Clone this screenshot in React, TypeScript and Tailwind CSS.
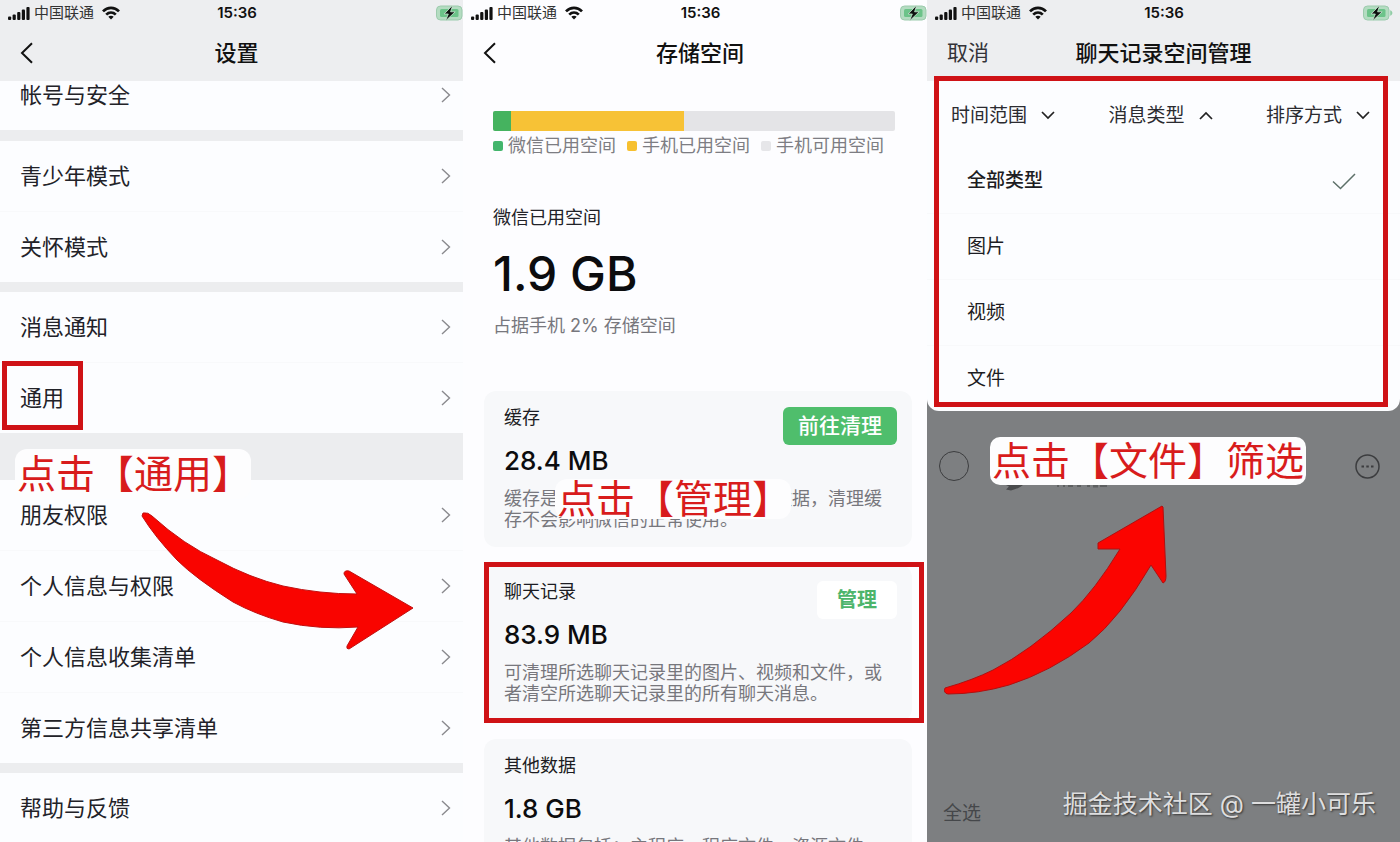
import type { ReactNode } from 'react';

const FONT = "font-[Inter,'Noto_Sans_CJK_SC',sans-serif]";

function SignalIcon() {
  return (
    <svg width="22" height="13" viewBox="0 0 22 13" fill="#111" aria-hidden="true">
      <rect x="0" y="9.400" width="3.200" height="3.600" rx="1" />
      <rect x="4.600" y="7.500" width="3.200" height="5.500" rx="1" />
      <rect x="9.200" y="5" width="3.200" height="8" rx="1" />
      <rect x="13.800" y="2.500" width="3.200" height="10.500" rx="1" />
      <rect x="18.400" y="0" width="3.200" height="13" rx="1" />
    </svg>
  );
}

function WifiIcon() {
  return (
    <svg width="18" height="14" viewBox="0 0 18 14" fill="none" stroke="#111" strokeWidth="2.700" aria-hidden="true">
      <path d="M1 5.400C5.600 .6 12.400 .6 17 5.400" />
      <path d="M4.200 8.600C7 5.900 11 5.900 13.800 8.600" />
      <path d="M9 13.600 6.300 10.800C7.800 9.500 10.200 9.500 11.700 10.800Z" fill="#111" stroke="none" />
    </svg>
  );
}

function BatteryIcon() {
  return (
    <svg width="30" height="16" viewBox="0 0 30 16" aria-hidden="true">
      <rect x=".5" y="1" width="25.500" height="14" rx="4" fill="#b4dcc1" stroke="#9ccbad" />
      <rect x="4" y="4" width="18.500" height="8" rx="1.500" fill="#6cc389" />
      <path d="M27.200 5.200c1.600.6 2.200 1.600 2.200 2.800s-.6 2.200-2.200 2.800z" fill="#8fcda4" />
      <path d="M16.800 0 8.200 9h4.100L9.400 16 19.200 6.800h-4.600z" fill="#0d120f" stroke="#cdebd6" strokeWidth=".8" />
    </svg>
  );
}

function StatusBar() {
  return (
    <div className="grid h-[26px] grid-cols-[1fr_auto_1fr] items-center pr-[7px] pl-2">
      <div className="flex items-center">
        <SignalIcon />
        <span className="mr-2 ml-1 text-[15px] leading-5 text-[#333]">中国联通</span>
        <WifiIcon />
      </div>
      <span className="text-[15px] leading-5 font-semibold text-[#111]">15:36</span>
      <div className="flex justify-end">
        <BatteryIcon />
      </div>
    </div>
  );
}

function NavBar({ title, left }: { title: string; left: ReactNode }) {
  return (
    <div className="grid h-[55px] grid-cols-[1fr_auto_1fr] items-center px-5 pb-[2px]">
      <div className="flex">{left}</div>
      <h1 className="text-[22px] leading-7 font-medium text-[#111]">{title}</h1>
    </div>
  );
}

function BackButton() {
  return (
    <button type="button" aria-label="返回">
      <svg width="14" height="22" viewBox="0 0 14 22" fill="none" stroke="#111" strokeWidth="2" aria-hidden="true">
        <path d="M12 1.200 2 11l10 9.800" />
      </svg>
    </button>
  );
}

function Callout({ children, className }: { children: string; className: string }) {
  return (
    <p className={`absolute bg-[#fdfdfe] pl-[2px] whitespace-nowrap text-[39px] text-[#d81c1c] ${className}`}>{children}</p>
  );
}

function SettingsRow({ label }: { label: string }) {
  return (
    <a href="#" className="box-content flex h-[70px] items-center justify-between pr-3 pl-5">
      <span className="text-[22px] leading-7 text-[#222228]">{label}</span>
      <svg width="10" height="16" viewBox="0 0 10 16" fill="none" stroke="#8a8a8e" strokeWidth="1.400" aria-hidden="true">
        <path d="M1 1l7.500 7L1 15" />
      </svg>
    </a>
  );
}

function SettingsGroup({ labels }: { labels: string[] }) {
  return (
    <div className="divide-y divide-[#f8f9fb] bg-[#fcfdff]">
      {labels.map((label) => (
        <SettingsRow key={label} label={label} />
      ))}
    </div>
  );
}

function SettingsScreen() {
  return (
    <section className="relative overflow-hidden bg-[#ecedef]">
      <header className="-mr-[10px] bg-[#edeef0]">
        <StatusBar />
        <NavBar title="设置" left={<BackButton />} />
      </header>
      <nav className="flex flex-col">
        <div className="-mt-[21px] [clip-path:inset(21px_0_0_0)]">
          <SettingsGroup labels={['帐号与安全']} />
        </div>
        <div className="mt-[11px]">
          <SettingsGroup labels={['青少年模式', '关怀模式']} />
        </div>
        <div className="mt-[10px]">
          <SettingsGroup labels={['消息通知', '通用']} />
        </div>
        <div className="mt-[47px]">
          <SettingsGroup labels={['朋友权限', '个人信息与权限', '个人信息收集清单', '第三方信息共享清单']} />
        </div>
        <div className="mt-[10px]">
          <SettingsGroup labels={['帮助与反馈']} />
        </div>
      </nav>
      <div className="absolute top-[361px] left-[2px] h-[69px] w-[81px] border-5 border-[#cf1216]" />
      <Callout className="top-[449px] left-[15px] rounded-xl leading-[50px]">点击【通用】</Callout>
      <svg className="absolute top-[505px] left-[135px]" width="285" height="150" viewBox="135 505 285 150" aria-hidden="true">
        <path
          d="M143 513Q148 512 152 516Q184 545 217 560Q250 578 283 586Q320 594 357 594L344 574Q344 570 349 571L413 608L349 649Q346 649 347 646L358 627Q320 630 283 622Q255 614 233 602Q195 578 177 560Q155 537 142 516Z"
          fill="#f90400"
          stroke="#c01010"
          strokeWidth="1"
        />
      </svg>
    </section>
  );
}

function Legend({ color, label }: { color: string; label: string }) {
  return (
    <li className="flex items-center gap-[5px]">
      <span className={`size-[10px] rounded-[2px] ${color}`} />
      <span className="text-[18px] leading-6 text-[#7d7d83]">{label}</span>
    </li>
  );
}

function StorageCard({ title, value, action, children }: { title: string; value: string; action?: ReactNode; children: string }) {
  return (
    <article className="h-[156px] rounded-xl bg-[#f7f8fa] pt-4 pr-[15px] pl-5">
      <div className="flex items-start justify-between">
        <div>
          <h2 className="text-[18px] leading-[22px] text-[#1c1c22]">{title}</h2>
          <p className="mt-[14px] text-[26px] leading-9 font-medium text-[#0c0c0e]">{value}</p>
        </div>
        {action}
      </div>
      <p className="mt-[9px] mr-2 text-[18px] leading-[21px] text-[#77777d]">{children}</p>
    </article>
  );
}

function StorageScreen() {
  return (
    <section className="relative overflow-hidden bg-[#fdfdff]">
      <div className="-mr-[10px]">
        <header>
          <StatusBar />
          <NavBar title="存储空间" left={<BackButton />} />
        </header>
        <div className="mt-[30px] mr-[42px] ml-[30px]">
          <div className="flex h-5 overflow-hidden rounded-[2px] bg-[#e4e4e7]">
            <div className="w-[18px] bg-[#45b35f]" />
            <div className="w-[43%] bg-[#f7c236]" />
          </div>
          <ul className="mt-[3px] flex gap-[11px] whitespace-nowrap">
            <Legend color="bg-[#43b56c]" label="微信已用空间" />
            <Legend color="bg-[#f7c02f]" label="手机已用空间" />
            <Legend color="bg-[#e6e6e9]" label="手机可用空间" />
          </ul>
          <p className="mt-12 text-[18px] leading-6 text-[#222228]">微信已用空间</p>
          <p className="mt-4 text-[48px] leading-[56px] font-medium text-[#0c0c0e]">1.9 GB</p>
          <p className="mt-3 text-[18px] leading-6 text-[#77777d]">占据手机 2% 存储空间</p>
        </div>
        <div className="mt-[53px] mr-[25px] ml-[21px] flex flex-col gap-[18px]">
          <StorageCard
            title="缓存"
            value="28.4 MB"
            action={
              <button type="button" className="rounded-md bg-[#4fbe6c] px-[15px] text-[21px] leading-[38px] font-medium text-white">
                前往清理
              </button>
            }
          >
            缓存是使用微信过程中产生的临时数据，清理缓存不会影响微信的正常使用。
          </StorageCard>
          <StorageCard
            title="聊天记录"
            value="83.9 MB"
            action={
              <button type="button" className="rounded-md bg-white px-5 text-[20px] leading-[38px] font-bold text-[#4db56b]">
                管理
              </button>
            }
          >
            可清理所选聊天记录里的图片、视频和文件，或者清空所选聊天记录里的所有聊天消息。
          </StorageCard>
          <StorageCard title="其他数据" value="1.8 GB">
            其他数据包括：主程序、程序文件、资源文件、插件等。
          </StorageCard>
        </div>
      </div>
      <Callout className="top-[479px] left-[92px] rounded-xl leading-[40px]">点击【管理】</Callout>
      <div className="absolute top-[562px] right-[3px] left-[21px] h-[161px] border-5 border-[#cf1216]" />
    </section>
  );
}

function Filter({ label, open = false }: { label: string; open?: boolean }) {
  return (
    <button type="button" aria-expanded={open} className="flex items-center gap-[14px] text-[19px] leading-6 text-[#2b2b30]">
      {label}
      <svg width="14" height="9" viewBox="0 0 14 9" fill="none" stroke="#222" strokeWidth="1.700" aria-hidden="true">
        <path d={open ? 'M1 8l6-6 6 6' : 'M1 1l6 6 6-6'} />
      </svg>
    </button>
  );
}

function TypeOption({ label, selected = false }: { label: string; selected?: boolean }) {
  return (
    <li>
      <button
        type="button"
        className={`flex h-[65px] w-full items-center justify-between pt-[2px] pr-11 pl-10 text-[19px] text-[#1c1c22] ${selected ? 'font-medium' : ''}`}
      >
        {label}
        {selected && (
          <svg width="24" height="17" viewBox="0 0 24 17" fill="none" stroke="#5d7069" strokeWidth="1.500" aria-hidden="true">
            <path d="M1 8.500l7.500 7L23 1" />
          </svg>
        )}
      </button>
    </li>
  );
}

function ManageScreen() {
  return (
    <section className="relative flex flex-col overflow-hidden bg-[#7d7f81]">
      <header className="bg-[#edeef0]">
        <StatusBar />
        <NavBar
          title="聊天记录空间管理"
          left={
            <button type="button" className="text-[21px] leading-7 text-[#333338]">
              取消
            </button>
          }
        />
      </header>
      <div className="bg-[#7d7f81]">
        <div className="rounded-b-xl bg-[#fcfdff]">
          <div className="flex h-[67px] items-center justify-between pt-[2px] pr-[30px] pl-6">
            <Filter label="时间范围" />
            <Filter label="消息类型" open />
            <Filter label="排序方式" />
          </div>
          <ul className="divide-y divide-[#f8f9fb]">
            <TypeOption label="全部类型" selected />
            <TypeOption label="图片" />
            <TypeOption label="视频" />
            <TypeOption label="文件" />
          </ul>
        </div>
      </div>
      <div className="mt-10 flex items-center justify-between pr-5 pl-3">
        <input type="checkbox" aria-label="选择聊天" className="size-[30px] appearance-none rounded-full border-[1.5px] border-[#3c3d3f]" />
        <button type="button" aria-label="更多">
          <svg width="25" height="25" viewBox="0 0 25 25" fill="none" stroke="#3c3d3f" strokeWidth="1.500" aria-hidden="true">
            <circle cx="12.500" cy="12.500" r="11.500" />
            <path d="M6.500 12.500h2.500M11.300 12.500h2.500M16 12.500h2.500" strokeWidth="2" />
          </svg>
        </button>
      </div>
      <footer className="mt-auto flex items-end justify-between pr-6 pb-[14px] pl-4">
        <button type="button" className="text-[19px] leading-7 text-[#45474a]">
          全选
        </button>
        <p className="pb-2 text-[25px] leading-8 text-[#dededf] [text-shadow:1px_1px_2px_#333]">掘金技术社区 @ 一罐小可乐</p>
      </footer>
      <div className="absolute top-[76px] right-[12px] left-[7px] h-[331px] border-5 border-[#cf1216]" />
      <svg className="absolute top-[480px] left-[73px]" width="120" height="12" viewBox="0 0 120 12" fill="#4a4b4d" aria-hidden="true">
        <path d="M4 4h20c-3 3-7 5-13 6.500L6 9.500l3-3z" />
        <path d="M57 5h2v2h-2zM63 5h2v2h-2zM68 5h5v2h-5zM77 5h4v2h-4zM87 5h3v2h-3zM93 5h5v2.500h-5zM100 5h7v2h-7z" opacity=".6" />
      </svg>
      <Callout className="top-[437px] left-[63px] rounded-[10px] pr-[2px] leading-[48px]">点击【文件】筛选</Callout>
      <svg className="absolute top-[500px] left-[11px]" width="236" height="200" viewBox="938 500 236 200" aria-hidden="true">
        <path
          d="M1162 506L1098 543V549L1120 549Q1095 590 1071 613Q1030 651 993 670Q973 680 945 688Q943 693 948 694Q978 694 1009 685Q1050 672 1089 643Q1120 618 1151 565L1163 583Q1166 582 1166 576L1163 507Z"
          fill="#fb0400"
          stroke="#b01010"
          strokeWidth="1"
        />
      </svg>
    </section>
  );
}

export default function App() {
  return (
    <main className={`grid h-screen grid-cols-[463fr_464fr_473fr] overflow-hidden ${FONT}`}>
      <SettingsScreen />
      <StorageScreen />
      <ManageScreen />
    </main>
  );
}
